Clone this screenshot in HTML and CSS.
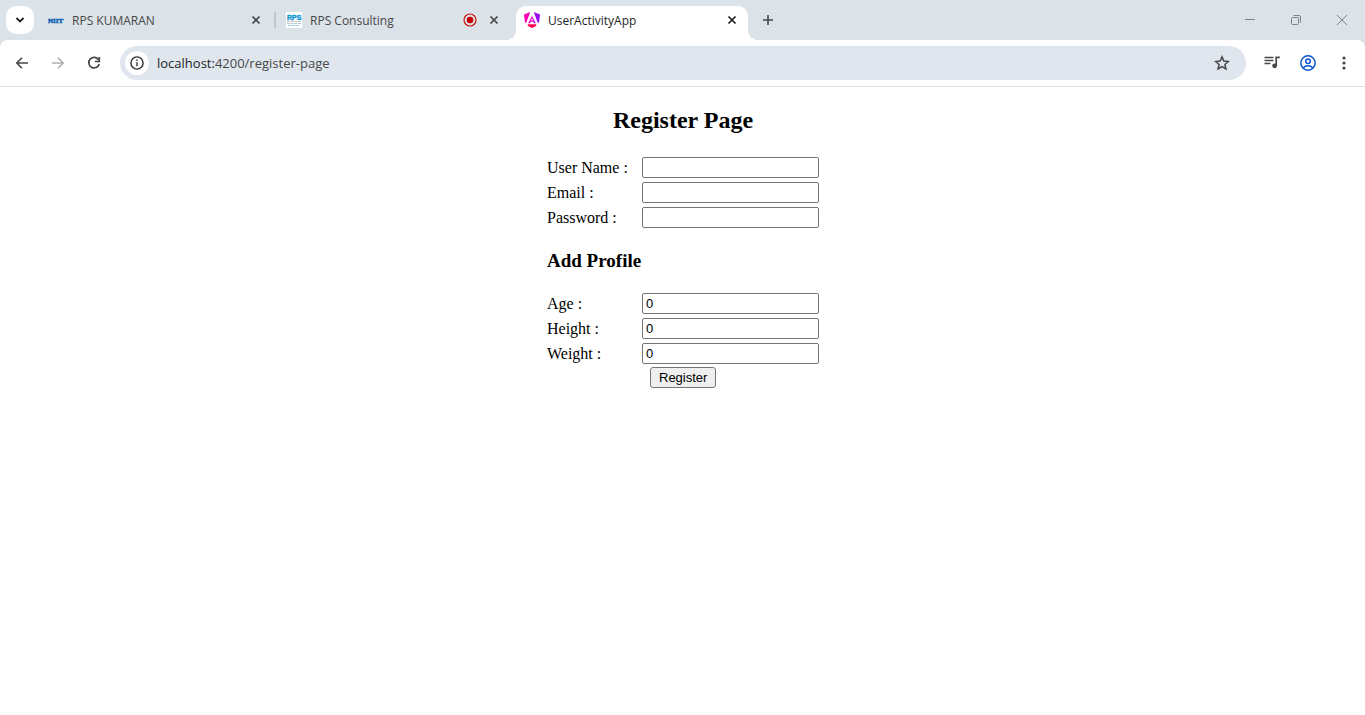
FILE: index.html
```html
<!DOCTYPE html>
<html lang="en">
<head>
<meta charset="utf-8">
<title>UserActivityApp</title>
<link rel="stylesheet" href="styles.css">
</head>
<body>
<header class="browser">
  <div class="tabstrip">
    <button class="tab-search" aria-label="Search tabs">
      <svg width="10" height="10" viewBox="0 0 10 10"><path d="M1.500 3l3.500 3.500L8.500 3" fill="none" stroke="#1f1f1f" stroke-width="1.800"/></svg>
    </button>
    <div class="tab">
      <svg class="favicon" width="16" height="16" viewBox="0 0 16 16"><text class="niit" x="0" y="11" fill="#0f62b4" stroke="#0f62b4" stroke-width=".5">NIIT</text></svg>
      <span class="tab-title">RPS KUMARAN</span>
      <button class="close" aria-label="Close tab"><svg width="10" height="10" viewBox="0 0 10 10"><path d="M1.500 1.500l7 7M8.500 1.500l-7 7" stroke="#474747" stroke-width="1.700"/></svg></button>
    </div>
    <div class="divider"></div>
    <div class="tab tab-second">
      <svg class="favicon" width="16" height="16" viewBox="0 0 16 16"><path fill="#fff" d="M0 0h16v16H0z"/><text class="rps" x="1" y="8" fill="#0a94cf" stroke="#0a94cf" stroke-width=".4">RPS</text><path d="M1 9.500h14M1 11.500h14" stroke="#b9c0c6" stroke-dasharray="3 .7"/><path d="M2 13.500h11" stroke="#8cc6e6" stroke-dasharray="2 .6"/></svg>
      <span class="tab-title">RPS Consulting</span>
      <svg class="record" width="14" height="14" viewBox="0 0 14 14"><circle cx="7" cy="7" r="6" fill="none" stroke="#c5150c" stroke-width="1.200"/><circle cx="7" cy="7" r="3.300" fill="#c80000"/></svg>
      <button class="close" aria-label="Close tab"><svg width="10" height="10" viewBox="0 0 10 10"><path d="M1.500 1.500l7 7M8.500 1.500l-7 7" stroke="#474747" stroke-width="1.700"/></svg></button>
    </div>
    <div class="tab tab-active">
      <svg class="favicon" width="16" height="16" viewBox="0 0 16 16">
        <defs><linearGradient id="ng" x1="0" y1="0" x2="1" y2="0"><stop offset="0" stop-color="#f0a"/><stop offset=".6" stop-color="#e010d8"/><stop offset="1" stop-color="#8a0cff"/></linearGradient></defs>
        <path fill="#ff00b0" d="M0 2.600L6.200 0 2.300 10.800 1 10.500z"/>
        <path fill="#9a08f8" d="M9.800 0L16 2.600l-1 7.900-1.300.3z"/>
        <path fill="url(#ng)" fill-rule="evenodd" d="M8 3.800l3.800 7.400H9.900l-.7-1.500H6.800l-.7 1.500H4.200zM8 6.200L7.100 8.500h1.800z"/>
        <path fill="#ff0548" d="M4 12.200h8l.5 1.600L8 16l-4.500-2.200z"/>
      </svg>
      <span class="tab-title">UserActivityApp</span>
      <button class="close" aria-label="Close tab"><svg width="10" height="10" viewBox="0 0 10 10"><path d="M1.500 1.500l7 7M8.500 1.500l-7 7" stroke="#1f1f1f" stroke-width="1.700"/></svg></button>
    </div>
    <button class="new-tab" aria-label="New tab"><svg width="12" height="12" viewBox="0 0 12 12"><path d="M6 1v10M1 6h10" stroke="#474747" stroke-width="1.600"/></svg></button>
    <div class="window-controls">
      <button aria-label="Minimize"><svg width="12" height="12" viewBox="0 0 12 12"><path d="M1 5.500h10" stroke="#808386"/></svg></button>
      <button aria-label="Restore"><svg width="12" height="12" viewBox="0 0 12 12" fill="none" stroke="#808386"><rect x="1.500" y="3.500" width="7" height="7" rx="1"/><path d="M3.500 1.500H9A1.500 1.500 0 0 1 10.500 3v5.500"/></svg></button>
      <button aria-label="Close window"><svg width="12" height="12" viewBox="0 0 12 12"><path d="M1 1l10 10M11 1L1 11" stroke="#808386"/></svg></button>
    </div>
  </div>
  <div class="toolbar">
    <button class="tool" aria-label="Back"><svg width="16" height="16" viewBox="0 0 16 16"><path d="M14 8H3M8 2.800L2.800 8 8 13.200" fill="none" stroke="#474747" stroke-width="1.600"/></svg></button>
    <button class="tool" aria-label="Forward"><svg width="16" height="16" viewBox="0 0 16 16"><path d="M2 8h11M8 2.800L13.200 8 8 13.200" fill="none" stroke="#adafb1" stroke-width="1.600"/></svg></button>
    <button class="tool" aria-label="Reload"><svg width="16" height="16" viewBox="0 0 16 16"><path d="M12.700 5A5.300 5.300 0 1 0 13.200 9" fill="none" stroke="#474747" stroke-width="1.700"/><path d="M13.300 2v4.500H8.800" fill="none" stroke="#474747" stroke-width="1.700"/></svg></button>
    <div class="omnibox">
      <button class="site-info" aria-label="Site information"><svg width="14" height="14" viewBox="0 0 14 14"><circle cx="7" cy="7" r="6.100" fill="none" stroke="#303134" stroke-width="1.400"/><path d="M7 6.300v4M7 3.500v1.500" stroke="#303134" stroke-width="1.400"/></svg></button>
      <a class="url" href="#"><span class="host">localhost:</span>4200/register-page</a>
      <button class="tool star" aria-label="Bookmark this page"><svg width="16" height="16" viewBox="0 0 16 16"><path d="M8 1.900l1.800 4.200 4.600.4-3.500 3 1.100 4.500L8 11.600 4 14l1.100-4.500-3.500-3 4.600-.4z" fill="none" stroke="#474747" stroke-width="1.500"/></svg></button>
    </div>
    <button class="tool" aria-label="Media controls"><svg width="16" height="16" viewBox="0 0 16 16"><path d="M.5 2.500h9M.5 5.500h9M.5 8.500h6" stroke="#474747" stroke-width="1.500"/><path d="M12.200 11V2.400H15.800" fill="none" stroke="#474747" stroke-width="1.700"/><circle cx="10.600" cy="10.800" r="2.400" fill="#474747"/></svg></button>
    <button class="tool" aria-label="Profile"><svg width="16" height="16" viewBox="0 0 16 16" fill="none" stroke="#0b57d0" stroke-width="1.500"><circle cx="8" cy="8" r="7.200"/><circle cx="8" cy="6.300" r="2.300"/><path d="M3 12.900c2.700-3 7.300-3 10 0"/></svg></button>
    <button class="tool" aria-label="Menu"><svg width="16" height="16" viewBox="0 0 16 16" fill="#474747"><circle cx="8" cy="3" r="1.600"/><circle cx="8" cy="8" r="1.600"/><circle cx="8" cy="13" r="1.600"/></svg></button>
  </div>
</header>
<main class="page">
  <h2 class="page-title">Register Page</h2>
  <form class="register-form">
    <div class="fields">
      <label for="user">User Name :</label><input id="user" type="text">
      <label for="email">Email :</label><input id="email" type="text">
      <label for="password">Password :</label><input id="password" type="password">
    </div>
    <h3 class="section-title">Add Profile</h3>
    <div class="fields">
      <label for="age">Age :</label><input id="age" type="text" value="0">
      <label for="height">Height :</label><input id="height" type="text" value="0">
      <label for="weight">Weight :</label><input id="weight" type="text" value="0">
    </div>
    <button class="submit" type="button">Register</button>
  </form>
</main>
</body>
</html>
```
FILE: styles.css
```css
* { box-sizing: border-box; }
body { margin: 0; background: #fff; color: #000; font-family: "Liberation Serif", "Times New Roman", serif; font-size: 16px; }
svg { display: block; flex: none; }

.browser { background: #dbe2e8; font-family: "Open Sans", "Noto Sans", sans-serif; }
.browser button { display: flex; align-items: center; justify-content: center; flex: none; padding: 0; border: 0; background: none; }
.tabstrip { display: flex; align-items: center; height: 40px; padding-left: 6px; }
.browser .tab-search { width: 28px; height: 28px; margin-right: 6px; border-radius: 10px; background: #fff; }
.tab { display: flex; align-items: center; width: 232px; height: 34px; padding: 0 8px; color: #474747; font-size: 12px; }
.tab-title { flex: 1; margin-left: 8px; white-space: nowrap; }
.divider { width: 2px; height: 16px; margin-left: 2px; background: #c4c7ca; }
.tab-second { margin-left: 2px; }
.close { width: 16px; height: 16px; }
.record { margin-right: 9px; }
.tab-active { position: relative; align-self: flex-end; height: 34px; margin-left: 6px; padding-bottom: 6px; border-radius: 10px 10px 0 0; background: #fff; color: #1f1f1f; }
.tab-active::before, .tab-active::after { content: ""; position: absolute; bottom: 0; width: 10px; height: 10px; }
.tab-active::before { right: 100%; background: radial-gradient(circle at 0 0, #dbe2e8 10px, #fff 10px); }
.tab-active::after { left: 100%; background: radial-gradient(circle at 100% 0, #dbe2e8 10px, #fff 10px); }
.niit { font: 700 7px "Liberation Serif", serif; }
.rps { font: 700 7px "Liberation Sans", sans-serif; }
.browser .new-tab { width: 28px; height: 28px; margin-left: 6px; }
.window-controls { display: flex; margin-left: auto; }
.window-controls button { width: 46px; height: 28px; }

.toolbar { display: flex; align-items: center; height: 47px; padding: 0 3px 0 4px; border-bottom: 1px solid #dfe1e3; border-radius: 8px 8px 0 0; background: #fff; }
.tool { width: 36px; height: 34px; }
.omnibox { display: flex; flex: 1; align-items: center; height: 34px; margin: 0 8px; padding: 0 6px 0 5px; border-radius: 17px; background: #dfe6ee; }
.browser .site-info { width: 24px; height: 24px; border-radius: 12px; background: #fff; }
.url { flex: 1; margin-left: 8px; color: #474747; font-size: 13px; text-decoration: none; }
.host { color: #1f1f1f; }

.page { display: flex; flex-direction: column; align-items: center; padding-left: 1px; }
.page-title { margin: 20px 0; font-size: 24px; line-height: 27px; }
.register-form { padding-top: 3px; }
.fields { display: grid; grid-template-columns: 95px auto; row-gap: 4px; align-items: center; line-height: 21px; }
.fields input { width: 177px; height: 21px; padding: 1px 3px; border: 1px solid #767676; border-radius: 2px; background: #fff; color: #000; font-family: "Liberation Sans", Arial, sans-serif; font-size: 13px; }
.section-title { margin: 22px 0; font-size: 19px; line-height: 21px; }
.submit { display: block; height: 21px; margin: 3px 0 0 103px; padding: 1px 8px; border: 1px solid #767676; border-radius: 3px; background: #efefef; color: #000; font-family: "Liberation Sans", Arial, sans-serif; font-size: 13px; }
```
